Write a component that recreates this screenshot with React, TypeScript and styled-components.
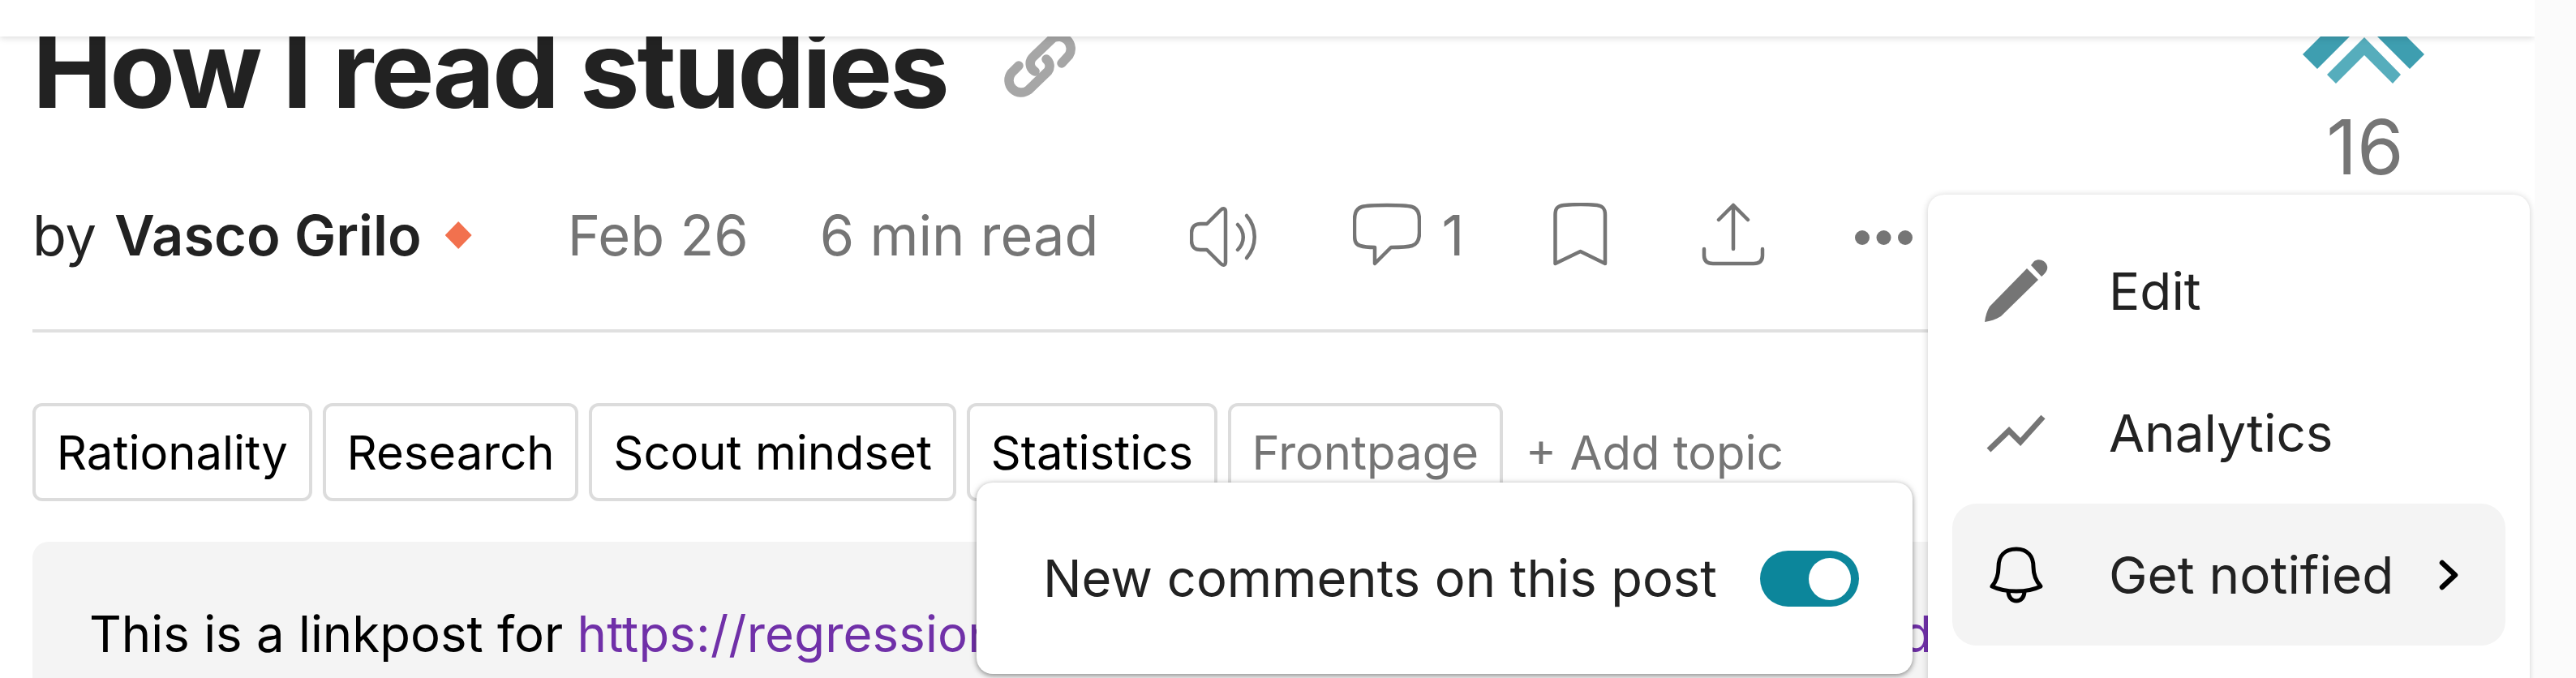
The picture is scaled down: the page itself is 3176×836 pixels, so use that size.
import React from "react";
import styled, { createGlobalStyle } from "styled-components";

const Global = createGlobalStyle`
  html, body { margin: 0; padding: 0; background: #fbfbfb; }
  * { box-sizing: border-box; }
`;

const FONT = `Inter, "Liberation Sans", sans-serif`;

const Page = styled.div`
  width: 3176px;
  height: 836px;
  overflow: hidden;
  font-family: ${FONT};
  background: #fbfbfb;
`;
const Main = styled.div`
  position: relative;
  width: 3125px;
  height: 836px;
  background: #fff;
  overflow: hidden;
`;
const Header = styled.header`
  position: relative;
  z-index: 2;
  height: 45px;
  background: #fff;
  box-shadow: 0 2px 8px rgba(0, 0, 0, 0.14);
`;
const Body = styled.div`
  display: flex;
  padding-left: 40px;
`;
const Post = styled.article`
  width: 2760px;
  flex: none;
`;
const VoteColumn = styled.div`
  flex: 1;
  display: flex;
  flex-direction: column;
  align-items: center;
  margin-top: -45px;
  padding-right: 98px;
`;
const VoteIcon = styled.svg`
  width: 150px;
  height: 103px;
  display: block;
  flex: none;
`;
const VoteCount = styled.div`
  font-size: 93px;
  line-height: 92px;
  font-weight: 400;
  color: #757575;
  margin: 32px 0 0 5px;
`;
const TitleRow = styled.div`
  display: flex;
  align-items: flex-start;
  height: 120px;
  margin-top: -20px;
`;
const Title = styled.h1`
  margin: 0;
  font-size: 132px;
  line-height: 120px;
  font-weight: 700;
  letter-spacing: -3.3px;
  color: #222;
  white-space: nowrap;
`;
const LinkGlyph = styled.svg`
  width: 130px;
  height: 110px;
  margin-left: 54px;
  margin-top: 5px;
  flex: none;
  color: #a6a6a6;
`;
const Byline = styled.div`
  display: flex;
  align-items: center;
  height: 100px;
  margin-top: 95px;
  font-size: 68.5px;
  white-space: nowrap;
`;
const By = styled.span`
  color: #222;
  margin-right: 22px;
`;
const Author = styled.span`
  color: #222;
  font-weight: 600;
`;
const Diamond = styled.span`
  width: 33px;
  height: 34px;
  margin-left: 29px;
  margin-right: 118px;
  background: #f2714e;
  clip-path: polygon(50% 0, 100% 50%, 50% 100%, 0 50%);
`;
const Meta = styled.span`
  color: #757575;
  margin-right: 88px;
`;
const Action = styled.span<{ $gap: number }>`
  display: inline-flex;
  align-items: center;
  margin-left: ${(p) => p.$gap}px;
  color: #757575;
`;
const ActionIcon = styled.svg`
  display: block;
  height: 80px;
  flex: none;
  fill: none;
  stroke: currentColor;
  stroke-width: 4.5;
  stroke-linecap: round;
  stroke-linejoin: round;
`;
const Dots = styled.svg`
  display: block;
  height: 80px;
  flex: none;
  fill: currentColor;
`;
const Count = styled.span`
  margin-left: 26px;
  color: #757575;
`;
const Divider = styled.div`
  height: 4px;
  background: #e0e0e0;
  margin-top: 66px;
`;
const Tags = styled.div`
  display: flex;
  align-items: center;
  gap: 13px;
  margin-top: 87px;
`;
const Tag = styled.span<{ $muted?: boolean }>`
  height: 121px;
  display: flex;
  align-items: center;
  padding: 0 25.8px;
  border: 4px solid #dcdcdc;
  border-radius: 12px;
  font-size: 58px;
  color: ${(p) => (p.$muted ? "#757575" : "#000")};
  white-space: nowrap;
`;
const AddTopic = styled.span`
  font-size: 58px;
  color: #757575;
  margin-left: 15px;
  white-space: nowrap;
`;
const LinkBox = styled.div`
  margin-top: 50px;
  height: 300px;
  padding: 78px 70px;
  background: #f4f4f4;
  border-radius: 20px;
  font-size: 61.7px;
  line-height: 72px;
  color: #000;
  white-space: nowrap;
`;
const Anchor = styled.a`
  color: #7030a8;
  letter-spacing: 0.15px;
`;
const Popup = styled.div`
  position: absolute;
  left: 1204px;
  top: 595px;
  width: 1154px;
  height: 236px;
  z-index: 3;
  display: flex;
  align-items: center;
  padding: 0 66px 0 82px;
  justify-content: space-between;
  background: #fff;
  border-radius: 20px;
  box-shadow: 0 2px 6px rgba(0, 0, 0, 0.4), 0 0 12px rgba(0, 0, 0, 0.08);
  font-size: 63.2px;
  color: #222;
  white-space: nowrap;
`;
const Switch = styled.span`
  width: 122px;
  height: 69px;
  padding: 9px 10px;
  border-radius: 35px;
  background: #0c869b;
  display: flex;
  justify-content: flex-end;
`;
const Knob = styled.span`
  width: 52px;
  height: 52px;
  border-radius: 50%;
  background: #fff;
`;
const Menu = styled.nav`
  position: absolute;
  left: 2377px;
  top: 240px;
  width: 742px;
  height: 640px;
  z-index: 3;
  padding: 31px 30px;
  background: #fff;
  border-radius: 20px;
  box-shadow: 0 1px 8px rgba(0, 0, 0, 0.2);
`;
const Item = styled.div<{ $active?: boolean }>`
  height: 175px;
  display: flex;
  align-items: center;
  padding: 0 58px 0 40px;
  border-radius: 30px;
  background: ${(p) => (p.$active ? "#f4f4f4" : "transparent")};
  font-size: 63.8px;
  color: #222;
`;
const ItemIcon = styled.svg`
  width: 78px;
  height: 78px;
  flex: none;
  margin-right: 75px;
`;
const Chevron = styled.svg`
  width: 24px;
  height: 38px;
  margin-left: auto;
`;

export default function App() {
  return (
    <Page>
      <Global />
      <Main>
        <Header />
        <Body>
          <Post>
            <TitleRow>
              <Title>How I read studies</Title>
              <LinkGlyph viewBox="0 0 130 110" fill="none" stroke="currentColor" strokeWidth="11.5" strokeLinecap="round">
                <path d="M34 51 L25 60 A15 15 0 0 0 46 81 L70 58 A11 11 0 0 0 68 43" />
                <path d="M87 48 L96 38 A15 15 0 0 0 76 17 L52 40 A11 11 0 0 0 54 58" />
              </LinkGlyph>
            </TitleRow>
            <Byline>
              <By>by</By>
              <Author>Vasco Grilo</Author>
              <Diamond />
              <Meta>Feb 26</Meta>
              <Meta>6 min read</Meta>
              <Action $gap={24}>
                <ActionIcon width="84" viewBox="17 15 84 80">
                  <path d="M38 41 L55 24 C58 21 61 22 61 26 V88 C61 92 58 93 55 90 L38 73 H30 C23 73 19 69 19 62 V52 C19 45 23 41 30 41 Z" />
                  <path d="M76 42 C85 51 85 64 76 73" />
                  <path d="M87 31 C100 46 100 68 87 83" />
                </ActionIcon>
              </Action>
              <Action $gap={117}>
                <ActionIcon width="84" viewBox="218 15 84 80">
                  <path d="M260 18 C275 18 284 18 291 20 C298 22 300 28 300 36 V52 C300 60 298 66 291 68 C284 70 275 70 265 70 L245 90 V70 C238 70 230 69 227 68 C220 66 220 60 220 52 V36 C220 28 222 22 229 20 C236 18 245 18 260 18 Z" />
                </ActionIcon>
                <Count>1</Count>
              </Action>
              <Action $gap={110}>
                <ActionIcon width="67" viewBox="15 15 67 80">
                  <path d="M17.5 90 V30 C17.5 22 20 19 28 18 C40 17 58 17 69 18 C76 19 79 22 79 30 V90 L48.5 75 Z" />
                </ActionIcon>
              </Action>
              <Action $gap={116}>
                <ActionIcon width="78" viewBox="198 15 78 80">
                  <path d="M237 72 V18 M219 36 L237 18 L255 36" />
                  <path d="M201 72 V80 C201 87 205 90 212 90 H262 C269 90 273 87 273 80 V72" />
                </ActionIcon>
              </Action>
              <Action $gap={111}>
                <Dots width="71" viewBox="389 15 71 80">
                  <circle cx="398" cy="58" r="9" />
                  <circle cx="424.5" cy="58" r="9" />
                  <circle cx="451" cy="58" r="9" />
                </Dots>
              </Action>
            </Byline>
            <Divider />
            <Tags>
              <Tag>Rationality</Tag>
              <Tag>Research</Tag>
              <Tag>Scout mindset</Tag>
              <Tag>Statistics</Tag>
              <Tag $muted>Frontpage</Tag>
              <AddTopic>+ Add topic</AddTopic>
            </Tags>
            <LinkBox>
              This is a linkpost for <Anchor>https://regressiontothemoon.substack.com/p/how-i-read</Anchor>
            </LinkBox>
          </Post>
          <VoteColumn>
            <VoteIcon viewBox="0 0 150 103">
              <path d="M0 67 L18 85 L75 28 L132 85 L150 67 L75 -8 Z" fill="#3e9eb0" />
              <path d="M76 46 L121 92 L111 103 L76 68 L41 103 L30 92 Z" fill="#56adbc" />
            </VoteIcon>
            <VoteCount>16</VoteCount>
          </VoteColumn>
        </Body>
        <Popup>
          New comments on this post
          <Switch>
            <Knob />
          </Switch>
        </Popup>
        <Menu>
          <Item>
            <ItemIcon viewBox="17 10 78 78" fill="#757575">
              <path d="M74 17 L78 12 C84 8 92 11 94 18 C95 22 93 26 87 31 Z" />
              <path d="M69 21 L83 35 L37 80 C30 84 24 86 17 87 C18 79 20 73 23 68 Z" />
            </ItemIcon>
            Edit
          </Item>
          <Item>
            <ItemIcon viewBox="17 184 78 78" fill="none" stroke="#757575" strokeWidth="7">
              <path d="M22 244 L47 220 L61 234 L89 203" />
            </ItemIcon>
            Analytics
          </Item>
          <Item $active>
            <ItemIcon viewBox="17 19 78 78" fill="none" stroke="#000" strokeWidth="5" strokeLinejoin="round">
              <path d="M26 72 C32 65 34 58 34 48 C34 35 41 26 56 26 C70 26 77 35 77 48 C77 58 80 65 86 72 C70 80 42 80 26 72 Z" />
              <path d="M46 78 C46 94 66 94 66 78" />
            </ItemIcon>
            Get notified
            <Chevron viewBox="0 0 24 38" fill="none" stroke="#000" strokeWidth="6.5" strokeLinecap="round" strokeLinejoin="round">
              <path d="M4 4 L20 19 L4 34" />
            </Chevron>
          </Item>
        </Menu>
      </Main>
    </Page>
  );
}
